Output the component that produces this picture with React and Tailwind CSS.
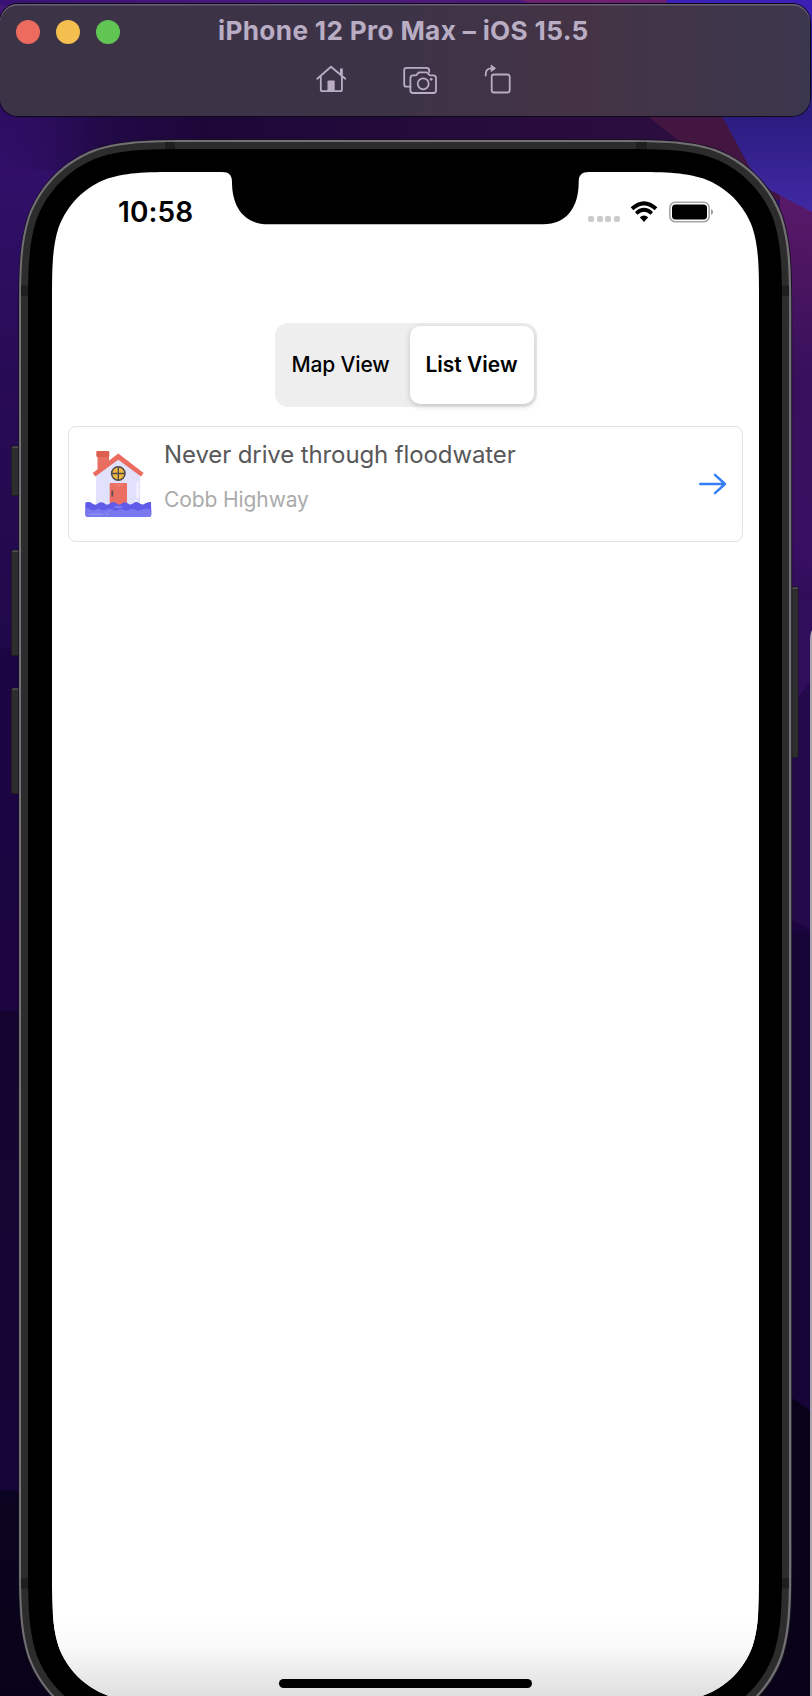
import React from "react";

// Continuous-corner rounded rectangle (iOS corner curve).
function squircle(x, y, w, h, r) {
  const R = x + w, B = y + h;
  const k = { a: 1.52866 * r, b: 1.08849 * r, c: 0.86841 * r, d: 0.63149 * r, e: 0.07491 * r, f: 0.37282 * r, g: 0.16906 * r };
  return [
    `M${x + k.a} ${y}H${R - k.a}`,
    `C${R - k.b} ${y} ${R - k.c} ${y} ${R - k.d} ${y + k.e}`,
    `C${R - k.f} ${y + k.g} ${R - k.g} ${y + k.f} ${R - k.e} ${y + k.d}`,
    `C${R} ${y + k.c} ${R} ${y + k.b} ${R} ${y + k.a}V${B - k.a}`,
    `C${R} ${B - k.b} ${R} ${B - k.c} ${R - k.e} ${B - k.d}`,
    `C${R - k.g} ${B - k.f} ${R - k.f} ${B - k.g} ${R - k.d} ${B - k.e}`,
    `C${R - k.c} ${B} ${R - k.b} ${B} ${R - k.a} ${B}H${x + k.a}`,
    `C${x + k.b} ${B} ${x + k.c} ${B} ${x + k.d} ${B - k.e}`,
    `C${x + k.f} ${B - k.g} ${x + k.g} ${B - k.f} ${x + k.e} ${B - k.d}`,
    `C${x} ${B - k.c} ${x} ${B - k.b} ${x} ${B - k.a}V${y + k.a}`,
    `C${x} ${y + k.b} ${x} ${y + k.c} ${x + k.e} ${y + k.d}`,
    `C${x + k.g} ${y + k.f} ${x + k.f} ${y + k.g} ${x + k.d} ${y + k.e}`,
    `C${x + k.c} ${y} ${x + k.b} ${y} ${x + k.a} ${y}Z`,
  ].join("");
}

function SideButton({ x, y, w, h }) {
  return (
    <g>
      <rect x={x - 0.5} y={y - 0.5} width={w + 1} height={h + 1} rx="2" fill="#150c1c" />
      <rect x={x} y={y} width={w} height={h} rx="1.5" fill="#2d2d2d" />
      <rect x={x + 1} y={y + 0.5} width={w - 1} height="1.3" fill="#55525a" />
    </g>
  );
}

function Backdrop() {
  return (
    <svg className="absolute inset-0" width="812" height="1696" viewBox="0 0 812 1696">
      <defs>
        <linearGradient id="wall" x1="0" y1="0" x2="0" y2="1">
          <stop offset="0" stopColor="#45187a" />
          <stop offset="0.06" stopColor="#2c0c60" />
          <stop offset="0.1" stopColor="#310f69" />
          <stop offset="0.22" stopColor="#280b55" />
          <stop offset="0.381" stopColor="#20094a" />
          <stop offset="0.383" stopColor="#1b0543" />
          <stop offset="0.595" stopColor="#1c0540" />
          <stop offset="0.597" stopColor="#14042f" />
          <stop offset="0.878" stopColor="#160638" />
          <stop offset="0.88" stopColor="#0b0420" />
          <stop offset="1" stopColor="#08031a" />
        </linearGradient>
        <linearGradient id="band" x1="0" y1="0" x2="1" y2="0">
          <stop offset="0" stopColor="#2b0c5c" stopOpacity="0" />
          <stop offset="0.12" stopColor="#220a48" />
          <stop offset="0.25" stopColor="#1d0739" />
          <stop offset="0.6" stopColor="#260c3c" />
          <stop offset="1" stopColor="#300e42" />
        </linearGradient>
        <linearGradient id="top" x1="0" y1="0" x2="1" y2="0">
          <stop offset="0" stopColor="#381272" />
          <stop offset="0.35" stopColor="#4b1a7c" />
          <stop offset="1" stopColor="#501a76" />
        </linearGradient>
        <linearGradient id="right" x1="0" y1="0" x2="0" y2="1">
          <stop offset="0" stopColor="#5c1a6c" />
          <stop offset="0.2" stopColor="#4a1460" />
          <stop offset="0.4" stopColor="#36105c" />
          <stop offset="0.75" stopColor="#370f62" />
          <stop offset="1" stopColor="#240a48" />
        </linearGradient>
        <linearGradient id="blue" x1="0" y1="0" x2="0" y2="1">
          <stop offset="0" stopColor="#3a20b6" />
          <stop offset="0.55" stopColor="#2c1c80" />
          <stop offset="1" stopColor="#4029a4" />
        </linearGradient>
        <linearGradient id="shade" x1="0" y1="0" x2="0" y2="1">
          <stop offset="0" stopColor="#fff" />
          <stop offset="0.35" stopColor="#fafafa" />
          <stop offset="1" stopColor="#dcdcdc" />
        </linearGradient>
        <clipPath id="screen">
          <path d={squircle(52, 172, 707, 1530, 88)} />
        </clipPath>
      </defs>
      <rect width="812" height="1696" fill="url(#wall)" />
      <rect width="812" height="5" fill="url(#top)" />
      <rect y="110" width="812" height="60" fill="url(#band)" />
      <path d="M640 110L690 150L760 200H812V150L725 110Z" fill="#431541" />
      <rect x="780" y="180" width="32" height="500" fill="url(#right)" />
      <path d="M780 600H812V930L780 915Z" fill="#240a4b" />
      <path d="M780 600H812V680L780 720Z" fill="#310e5c" />
      <path d="M780 932H812V1408L780 1390Z" fill="#180538" />
      <path d="M780 1390L812 1412V1696H700L790 1580Z" fill="#090319" />
      <path d="M520 0H666L680 5H536Z" fill="#6b2070" />
      <path d="M666 0H812V212L770 190L750 168L722 116H700V5H668Z" fill="url(#blue)" />

      <SideButton x={11.5} y={446} w={9} h={49.5} />
      <SideButton x={11.5} y={550} w={9} h={105.5} />
      <SideButton x={11.5} y={688} w={9} h={105.5} />
      <SideButton x={789} y={587} w={9} h={170.5} />

      <path d={squircle(18.3, 139.3, 773.9, 1596, 121.7)} fill="#14101c" />
      <path d={squircle(19, 140, 772.3, 1594, 121)} fill="#747176" />
      <path d={squircle(21, 142, 768, 1590, 119)} fill="#2c2c2c" />
      <g fill="#1e1e1e">
        <rect x="165" y="142" width="10" height="8" />
        <rect x="636" y="142" width="11" height="8" />
        <rect x="21" y="285.5" width="8" height="10.5" />
        <rect x="782" y="285.5" width="7" height="10.5" />
        <rect x="21" y="1578" width="8" height="10.5" />
        <rect x="782" y="1578" width="7" height="10.5" />
      </g>
      <path d={squircle(28, 149, 754, 1576, 112)} fill="#000" />
      <g clipPath="url(#screen)">
        <rect x="52" y="172" width="707" height="1530" fill="#fff" />
        <rect x="52" y="1615" width="707" height="87" fill="url(#shade)" />
        <path d="M222 171V172C229 172 232 175 232 182C232 207 244 224.300 268 224.300H543C567 224.300 578.700 207 578.700 182C578.700 175 581.700 172 589 172V171Z" fill="#000" />
      </g>
      <path d="M812 630C810.500 633 810 636 810 640V1696H812Z" fill="#a9a6ad" />
    </svg>
  );
}

function HomeIcon() {
  return (
    <svg width="32" height="28" viewBox="0 0 32 28" fill="none" stroke="#b9adc4" strokeWidth="1.8" strokeLinecap="round" strokeLinejoin="round">
      <path d="M1.300 13.700L15 1.800L29.300 13.700M4.800 11.500V24.500Q4.800 26.200 6.500 26.200H24.200Q25.900 26.200 25.900 24.500V11.500" />
      <path d="M25.400 3.500V10" strokeWidth="2.800" strokeLinecap="butt" />
      <path d="M11.500 16.500Q11.500 15.500 12.500 15.500H17.700Q18.700 15.500 18.700 16.500V26H11.500Z" fill="#b9adc4" stroke="none" />
    </svg>
  );
}

function CameraIcon() {
  return (
    <svg width="35" height="28" viewBox="0 0 35 28" fill="none" stroke="#b9adc4" strokeWidth="1.8" strokeLinecap="round" strokeLinejoin="round">
      <path d="M7.500 20.700H3.500Q1.200 20.700 1.200 18.400V4.200Q1.200 1.800 3.500 1.800H23.500Q26.200 1.800 26.200 4.500V6" />
      <path d="M10 9.300H12.500Q13.700 9.300 14.300 8L14.900 7.300Q15.500 6.300 16.700 6.300H23Q24.200 6.300 24.900 7.300L25.500 8Q26.200 9.300 27.500 9.300H30.300Q33 9.300 33 12V24.500Q33 27 30.300 27H10Q7.400 27 7.400 24.500V12Q7.400 9.300 10 9.300Z" />
      <circle cx="20.200" cy="17.800" r="5.500" />
      <circle cx="28.200" cy="13.300" r="1.400" fill="#b9adc4" stroke="none" />
    </svg>
  );
}

function RotateIcon() {
  return (
    <svg width="28" height="30" viewBox="0 0 28 30" fill="none" stroke="#b9adc4" strokeWidth="1.800" strokeLinecap="round" strokeLinejoin="round">
      <rect x="7.700" y="10.500" width="18" height="18" rx="2.300" />
      <path d="M1.700 11.500V10Q1.700 4.500 7.500 4.300H8" />
      <path d="M7.500 1.300L11.500 4.400L7.500 7.300Z" fill="#b9adc4" strokeWidth="1" />
    </svg>
  );
}

function WindowBar() {
  return (
    <div className="h-[112px] w-[810px] rounded-[18px] bg-linear-to-r from-[#3d3347] from-50% via-[#443345] via-72% to-[#3b374d] shadow-[0_0_0_1px_#0e0818,inset_0_1.500px_0_#6a6176]">
      <div className="flex items-center pt-4 pl-4">
        <div className="flex gap-4">
          <span className="size-6 rounded-full bg-[#ec6a5e]" />
          <span className="size-6 rounded-full bg-[#f4bf4f]" />
          <span className="size-6 rounded-full bg-[#61c554]" />
        </div>
        <h1 className="-mt-[3px] ml-[98px] text-[26.200px] leading-6 font-bold tracking-[0.330px] whitespace-nowrap text-[#b9adc4]">iPhone 12 Pro Max – iOS 15.5</h1>
      </div>
      <div className="flex items-start pt-[21px] pl-[315.500px]">
        <HomeIcon />
        <div className="pt-px pl-[55.500px]"><CameraIcon /></div>
        <div className="-mt-px pl-[46px]"><RotateIcon /></div>
      </div>
    </div>
  );
}

function StatusBar() {
  return (
    <div className="flex items-center pr-[45.500px] pl-[66px]">
      <time className="w-[80px] text-[28px] leading-8 font-semibold tracking-[0.100px] text-black">10:58</time>
      <div className="ml-auto flex items-center">
        <div className="flex gap-[2.700px] pt-[14px]">
          {[0, 1, 2, 3].map((i) => <span key={i} className="size-[6px] rounded-[2px] bg-[#cbcbcb]" />)}
        </div>
        <svg className="ml-[10px]" width="28" height="22" viewBox="0 0 28 22">
          <path d="M2 7.800Q14 -3 26 7.800" fill="none" stroke="#000" strokeWidth="4" />
          <path d="M6.200 12.300Q14 5.200 21.800 12.300" fill="none" stroke="#000" strokeWidth="3.600" />
          <path d="M9.800 16.200Q14 12.600 18.200 16.200L14 21Z" fill="#000" />
        </svg>
        <svg className="ml-[9.500px]" width="46" height="22" viewBox="0 0 46 22">
          <rect x="1.800" y="1.300" width="39.400" height="19.400" rx="5.500" fill="none" stroke="#a6a6a6" strokeWidth="1.600" />
          <rect x="4" y="3.600" width="35" height="14.800" rx="3.500" />
          <path d="M43 8Q45.200 9 45.200 11T43 14Z" fill="#a0a0a0" />
        </svg>
      </div>
    </div>
  );
}

function FloodedHouse() {
  return (
    <svg width="67" height="68" viewBox="0 0 67 68">
      <path d="M12.500 3H24V19L12.500 24Z" fill="#e87062" />
      <rect x="11.300" y="1" width="13" height="6" rx="1" fill="#dd5f50" />
      <path d="M11 22L33.300 7L55 22V58H11Z" fill="#e2e1fc" />
      <path d="M52.500 32V48M51 50V53" stroke="#f4f3ff" strokeWidth="2" />
      <path d="M33.300 3.500L58.600 23L56 26.500L33.300 9.800L10.300 26.500L7.700 23Z" fill="#eb6c5f" />
      <circle cx="33.300" cy="23.500" r="6.700" fill="#f1b640" stroke="#4c4a4c" strokeWidth="1.500" />
      <path d="M33.300 17V30.500M27 23.500H40" stroke="#4c4a4c" strokeWidth="1.300" />
      <rect x="24.700" y="33" width="17.300" height="23" rx="1" fill="#eb6f63" />
      <path d="M31 35H37" stroke="#f09085" strokeWidth="1" />
      <path d="M27.300 40.500V46.500" stroke="#564b50" strokeWidth="1.700" />
      <path d="M0.300 53Q1 51.500 4 52Q6 52 8 54Q11 55.500 13 53.500Q15.500 51.200 19 53Q22 56 25 53.500Q28 51 31 53Q34 56 37 53.500Q40 51 43 53.500Q45 55.500 48 53.500Q51 51 54 53Q57 55.500 60 53.500Q63 51.500 66 52L66.300 64Q66.300 67 64 67H3Q0.300 67 0.300 64Z" fill="#605be8" />
      <path d="M0.300 59Q2 57.500 5 59Q7 61 10 60Q13 58 16 59.500Q19 61.500 22 59.500Q25 58 28 60Q31 61.500 33 60Q36 58 39 60Q42 61.500 45 59.500Q48 58 51 60Q54 61.500 57 59.500Q61 58 66.300 60V64Q66.300 67 64 67H3Q0.300 67 0.300 64Z" fill="#7a78ef" />
      <path d="M29.500 57H37M4 64.200H18M20.500 64.200H23.500" stroke="#a09ff6" strokeWidth="0.900" />
    </svg>
  );
}

export default function App() {
  return (
    <main className="relative h-[1696px] w-[812px] overflow-hidden bg-[#14042f] font-['Inter',sans-serif]">
      <Backdrop />
      <div className="relative pt-1">
        <WindowBar />
        <section className="ml-[52px] flex h-[1580px] w-[707px] flex-col pt-[80px]">
          <StatusBar />
          <div className="mt-[94.500px] flex h-[84px] w-[262px] self-center rounded-[13px] bg-[#eeeeee] p-[3px] text-black">
            <button className="flex-1 pt-px pr-1.5 text-[21px] font-medium tracking-[-0.150px] whitespace-nowrap">Map View</button>
            <button className="w-[124px] rounded-[10px] bg-white pt-px text-[21px] font-semibold tracking-[0px] whitespace-nowrap shadow-[0_2px_6px_rgba(0,0,0,0.180)]">List View</button>
          </div>
          <article className="mx-4 mt-[19.500px] flex h-[116px] rounded-lg border border-[#e2e2e2] pl-4">
            <div className="pt-[23px]"><FloodedHouse /></div>
            <div className="flex flex-col pt-3 pl-3">
              <h2 className="text-[24px] leading-8 tracking-[-0.110px] whitespace-nowrap text-[#58585a]">Never drive through floodwater</h2>
              <p className="mt-[13px] text-[21px] leading-8 tracking-[-0.100px] whitespace-nowrap text-[#ababab]">Cobb Highway</p>
            </div>
            <svg className="mt-[45px] mr-[15px] ml-auto" width="30" height="24" viewBox="0 0 30 24" fill="none" stroke="#377df6" strokeWidth="2.400" strokeLinecap="round" strokeLinejoin="round">
              <path d="M3.200 12H27.500M18 2.800L28 12L18 21.200" />
            </svg>
          </article>
          <div className="mt-auto mb-2 h-[9px] w-[253px] self-center rounded-full bg-black" />
        </section>
      </div>
    </main>
  );
}
